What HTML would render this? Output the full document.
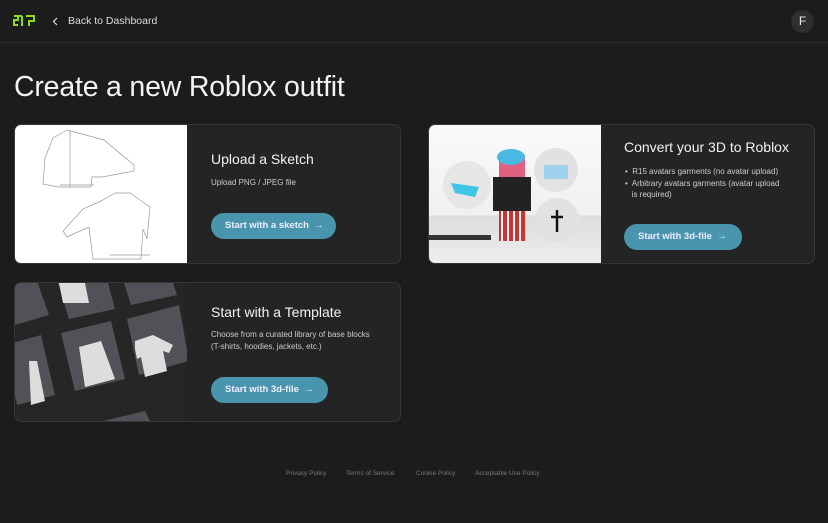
<!DOCTYPE html>
<html><head><style>
*{box-sizing:border-box;margin:0;padding:0}
body{width:828px;height:523px;background:#1c1c1c;font-family:"Liberation Sans",sans-serif;color:#eee;position:relative;overflow:hidden}
.hdr{position:absolute;left:0;top:0;width:828px;height:43px;border-bottom:1px solid #2e2e2e}
.back{position:absolute;left:68px;top:15px;font-size:10.5px;color:#ddd}
.av{position:absolute;left:791px;top:10px;width:23px;height:23px;border-radius:50%;background:#2f2f2f;color:#eee;font-size:12px;text-align:center;line-height:23px}
h1{position:absolute;left:14px;top:71px;font-size:28.5px;font-weight:normal;color:#f2f2f2;letter-spacing:-0.2px}
.card{position:absolute;width:387px;height:140px;background:#242424;border:1px solid #363636;border-radius:7px;overflow:hidden}
.img{position:absolute;left:0;top:0;width:172px;height:100%}
.t{font-size:14px;color:#f2f2f2;position:absolute;white-space:nowrap}
.d{font-size:8px;color:#ccc;position:absolute;white-space:nowrap;line-height:11.5px}
.btn{position:absolute;height:26px;border-radius:13px;background:#4a95ae;color:#eef;font-size:9.5px;font-weight:bold;line-height:26px;padding:0 14px;white-space:nowrap}
.ft{position:absolute;top:469px;font-size:6.5px;color:#777}
</style></head><body>
<div class="hdr">
<svg style="position:absolute;left:13px;top:14px" width="22" height="14" viewBox="0 0 22 14"><path d="M1 2h8M5 2v4H1v5h4M9 2v10M13 2h8v5h-5v5" stroke="#8bdc1e" stroke-width="2" fill="none"/></svg>
<svg style="position:absolute;left:52px;top:17px" width="6" height="9"><path d="M5 1L1.5 4.5 5 8" stroke="#ddd" stroke-width="1.2" fill="none"/></svg>
<div class="back">Back to Dashboard</div>
<div class="av">F</div>
</div>
<h1>Create a new Roblox outfit</h1>

<div class="card" style="left:14px;top:124px">
<div class="img" style="background:#fff">
<svg width="172" height="140" viewBox="0 0 172 140" fill="none" stroke="#999" stroke-width="0.7"><path d="M52 5l-14 8-8 20-2 26 15 3h33l1-10 10 0 32-6 0-6-30-25-22-6z"/><path d="M55 5v57M45 60h34"/><path d="M100 68l-14 8-18 8-20 22 4 6 22-10 4 32h48l2-30 4 10 3-32-20-14z"/><path d="M95 130h40"/></svg>
</div>
<div class="t" style="left:196px;top:26px">Upload a Sketch</div>
<div class="d" style="left:196px;top:52px">Upload PNG / JPEG file</div>
<div class="btn" style="left:196px;top:88px;width:125px">Start with a sketch &nbsp;→</div>
</div>

<div class="card" style="left:428px;top:124px">
<div class="img" style="background:linear-gradient(#fafafa 0%,#f0f0f0 65%,#ddd 66%,#eee 100%)">
<svg width="172" height="140" viewBox="0 0 172 140"><circle cx="38" cy="60" r="24" fill="#e6e6e6"/><circle cx="127" cy="45" r="22" fill="#e2e2e2"/><circle cx="128" cy="95" r="22" fill="#e2e2e2"/><path d="M22 58l28 4-4 10-20-4z" fill="#3ec6e6"/><rect x="70" y="30" width="26" height="22" fill="#e06080"/><ellipse cx="82" cy="32" rx="14" ry="8" fill="#4ab8e0"/><rect x="64" y="52" width="38" height="34" fill="#222"/><rect x="70" y="86" width="26" height="30" fill="#c33"/><path d="M73 86v30M79 86v30M85 86v30M91 86v30" stroke="#fff" stroke-width="2"/><rect x="115" y="40" width="24" height="14" fill="#9cd2ec"/><path d="M128 85v22M122 92h12" stroke="#111" stroke-width="2.5"/><rect x="0" y="110" width="62" height="5" fill="#333"/></svg>
</div>
<div class="t" style="left:195px;top:14px">Convert your 3D to Roblox</div>
<div class="d" style="left:196px;top:41px">•&nbsp; R15 avatars garments (no avatar upload)<br>•&nbsp; Arbitrary avatars garments (avatar upload<br>&nbsp;&nbsp;&nbsp;is required)</div>
<div class="btn" style="left:195px;top:99px;width:118px">Start with 3d-file &nbsp;→</div>
</div>

<div class="card" style="left:14px;top:282px">
<div class="img" style="background:#262626">
<svg width="172" height="140" viewBox="0 0 172 140"><g fill="#505257"><path d="M-10 0l30 -8 14 40-34 10z"/><path d="M40-10l48-8 12 44-46 10z"/><path d="M104-16l46-8 12 36-46 10z"/><path d="M-10 62l36-10 14 60-38 10z"/><path d="M46 50l50-12 14 58-50 12z"/><path d="M112 36l52-14 10 56-50 14z"/><path d="M80 140l50-12 10 20z"/></g><g fill="#ddd"><path d="M44 0h26l4 20h-26z"/><path d="M14 78l8 0 8 40-14 4z"/><path d="M64 64l22-6 14 38-30 8z"/><path d="M120 58l18-6 20 10-4 8-6-2 4 20-22 6-4-20-4 2-2-10z"/></g></svg>
</div>
<div class="t" style="left:196px;top:21px">Start with a Template</div>
<div class="d" style="left:196px;top:46px">Choose from a curated library of base blocks<br>(T-shirts, hoodies, jackets, etc.)</div>
<div class="btn" style="left:196px;top:94px;width:117px">Start with 3d-file &nbsp;→</div>
</div>

<div class="ft" style="left:286px;top:470px">Privacy Policy</div>
<div class="ft" style="left:346px;top:470px">Terms of Service</div>
<div class="ft" style="left:416px;top:470px">Cookie Policy</div>
<div class="ft" style="left:475px;top:470px">Acceptable Use Policy</div>
</body></html>
